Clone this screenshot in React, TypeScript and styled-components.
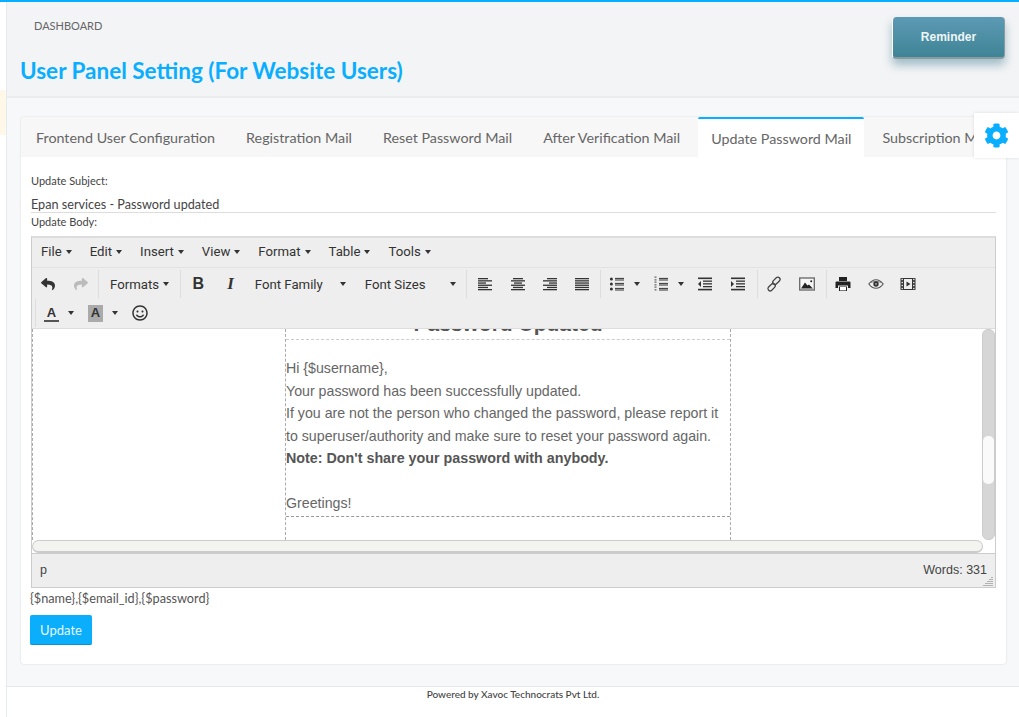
import { ReactNode } from 'react';
import { FaCog, FaReply, FaShare, FaRegSmile } from 'react-icons/fa';
import styled, { createGlobalStyle } from 'styled-components';

const GlobalStyle = createGlobalStyle`
  html, body {
    margin: 0;
    padding: 0;
    height: 717px;
    overflow: hidden;
    background: #fff;
    font-family: Lato, "Liberation Sans", sans-serif;
  }
  * {
    box-sizing: border-box;
  }
`;

const ALIGN: Record<string, number[][]> = {
  left: [[1, 11], [1, 15], [1, 9], [1, 15], [1, 11], [1, 15]],
  center: [[3, 13], [1, 15], [4, 12], [1, 15], [3, 13], [1, 15]],
  right: [[5, 15], [1, 15], [7, 15], [1, 15], [5, 15], [1, 15]],
  justify: [[1, 15], [1, 15], [1, 15], [1, 15], [1, 15], [1, 15]],
};

const AlignIcon = ({ type }: { type: string }) => (
  <svg width="16" height="16" viewBox="0 0 16 16">
    {ALIGN[type].map(([a, b], i) => (
      <rect key={i} x={a} y={2 + i * 2.2} width={b - a} height="1.3" fill="#333" />
    ))}
  </svg>
);

const ListIcon = ({ numbered }: { numbered?: boolean }) => (
  <svg width="16" height="16" viewBox="0 0 16 16">
    {[3, 8, 13].map((y) =>
      numbered ? (
        <path key={y} d={`M1.5 ${y - 2.4}h2v1.2h-2zM1.5 ${y + 0.2}h2v1.2h-2z`} fill="#666" />
      ) : (
        <circle key={y} cx="2.4" cy={y} r="1.5" fill="#333" />
      ),
    )}
    {[2.4, 4, 7.4, 9, 12.4, 14].map((y) => (
      <rect key={y} x="6" y={y - 0.5} width="9" height="1" fill="#333" />
    ))}
  </svg>
);

const IndentIcon = ({ out }: { out?: boolean }) => (
  <svg width="16" height="16" viewBox="0 0 16 16">
    <rect x="1" y="1.5" width="14" height="1.6" fill="#333" />
    <rect x="6" y="4.5" width="9" height="1.3" fill="#333" />
    <rect x="6" y="7.2" width="9" height="1.3" fill="#333" />
    <rect x="6" y="10" width="9" height="1.3" fill="#333" />
    <rect x="1" y="12.8" width="14" height="1.6" fill="#333" />
    <path d={out ? 'M4 5v6L1 8z' : 'M1 5v6l3-3z'} fill="#333" />
  </svg>
);

const LinkIcon = () => (
  <svg width="16" height="16" viewBox="0 0 16 16" fill="none" stroke="#444" strokeWidth="1.3">
    <rect x="8.2" y="0.6" width="4.4" height="8.4" rx="2.2" transform="rotate(45 10.4 4.8)" />
    <rect x="3.4" y="7" width="4.4" height="8.4" rx="2.2" transform="rotate(45 5.6 11.2)" />
  </svg>
);

const ImageIcon = () => (
  <svg width="16" height="16" viewBox="0 0 16 16">
    <rect x="0.7" y="2" width="14.6" height="12" fill="#f6f6f6" stroke="#666" strokeWidth="1.3" />
    <path d="M2 12.6 6 6.5l2.4 3 1.6-1 3.8 4.1z" fill="#222" />
    <circle cx="12.2" cy="5.2" r="1" fill="#222" />
  </svg>
);

const PrintIcon = () => (
  <svg width="16" height="16" viewBox="0 0 16 16">
    <path d="M4 1h8v4H4z" fill="#222" />
    <path d="M1.5 5.5h13a1 1 0 0 1 1 1V12H13V9.5H3V12H.5V6.5a1 1 0 0 1 1-1z" fill="#222" />
    <path d="M4 10.5h8V15H4z" fill="#222" />
    <path d="M5 11h6v3.4H5z" fill="#fff" />
  </svg>
);

const EyeIcon = () => (
  <svg width="16" height="16" viewBox="0 0 16 16">
    <path d="M.8 8C3 5 5.4 3.7 8 3.7S13 5 15.2 8c-2.2 3-4.6 4.3-7.2 4.3S3 11 .8 8z" fill="none" stroke="#555" strokeWidth="1.1" />
    <path d="M2.5 6.6C4.5 5.2 11.5 5.2 13.5 6.6" fill="none" stroke="#777" strokeWidth="1" />
    <circle cx="8" cy="8" r="2.7" fill="#333" />
    <circle cx="8" cy="8" r="0.9" fill="#aaa" />
  </svg>
);

const MediaIcon = () => (
  <svg width="16" height="16" viewBox="0 0 16 16">
    <rect x="0.5" y="2" width="15" height="12" fill="#333" />
    <rect x="4" y="3" width="8" height="10" fill="#eee" />
    {[3, 6, 9, 12].map((y) => (
      <g key={y}>
        <rect x="1.5" y={y - 0.2} width="1.4" height="1.4" fill="#eee" />
        <rect x="13.1" y={y - 0.2} width="1.4" height="1.4" fill="#eee" />
      </g>
    ))}
    <path d="M6.5 5.5v5l4-2.5z" fill="#333" />
  </svg>
);

const Caret = () => <CaretMark />;

interface ToolProps {
  children: ReactNode;
  $w?: number;
}

const Tool = ({ children, $w = 32.4 }: ToolProps) => <ToolButton $w={$w}>{children}</ToolButton>;

const SplitTool = ({ children }: { children: ReactNode }) => (
  <SplitButton>
    {children}
    <SplitCaret />
  </SplitButton>
);

const tabs = [
  'Frontend User Configuration',
  'Registration Mail',
  'Reset Password Mail',
  'After Verification Mail',
  'Update Password Mail',
  'Subscription Mail',
];

const menus = ['File', 'Edit', 'Insert', 'View', 'Format', 'Table', 'Tools'];

const App = () => {
  return (
    <>
      <GlobalStyle />
      <Page>
        <Sidebar>
          <SidebarNotice />
        </Sidebar>
        <Main>
          <Header>
            <Crumb>DASHBOARD</Crumb>
            <Title>User Panel Setting (For Website Users)</Title>
            <ReminderButton>Reminder</ReminderButton>
          </Header>
          <Content>
            <Card>
              <TabBar>
                {tabs.map((tab) => (
                  <Tab key={tab} $active={tab === 'Update Password Mail'}>
                    {tab}
                  </Tab>
                ))}
              </TabBar>
              <Form>
                <FieldLabel>Update Subject:</FieldLabel>
                <SubjectInput>Epan services - Password updated</SubjectInput>
                <BodyLabel>Update Body:</BodyLabel>
                <Editor>
                  <MenuBar>
                    {menus.map((menu) => (
                      <MenuItem key={menu}>
                        {menu}
                        <Caret />
                      </MenuItem>
                    ))}
                  </MenuBar>
                  <Toolbar>
                    <ToolRow>
                      <ToolGroup $w={67}>
                        <Tool><FaReply size={14} color="#333" /></Tool>
                        <Tool><FaShare size={14} color="#bbb" /></Tool>
                      </ToolGroup>
                      <ToolGroup $w={82}>
                        <ListBox $w={81}>Formats<Caret /></ListBox>
                      </ToolGroup>
                      <ToolGroup $w={286}>
                        <Tool><BoldGlyph>B</BoldGlyph></Tool>
                        <Tool><ItalicGlyph>I</ItalicGlyph></Tool>
                        <ListBox $w={110} $spread>Font Family<Caret /></ListBox>
                        <ListBox $w={110} $spread>Font Sizes<Caret /></ListBox>
                      </ToolGroup>
                      <ToolGroup $w={134} $inset>
                        <Tool><AlignIcon type="left" /></Tool>
                        <Tool><AlignIcon type="center" /></Tool>
                        <Tool><AlignIcon type="right" /></Tool>
                        <Tool><AlignIcon type="justify" /></Tool>
                      </ToolGroup>
                      <ToolGroup $w={157}>
                        <SplitTool><ListIcon /></SplitTool>
                        <SplitTool><ListIcon numbered /></SplitTool>
                        <Tool><IndentIcon out /></Tool>
                        <Tool><IndentIcon /></Tool>
                      </ToolGroup>
                      <ToolGroup $w={69}>
                        <Tool><LinkIcon /></Tool>
                        <Tool><ImageIcon /></Tool>
                      </ToolGroup>
                      <ToolGroup $w={100} $last>
                        <Tool><PrintIcon /></Tool>
                        <Tool><EyeIcon /></Tool>
                        <Tool><MediaIcon /></Tool>
                      </ToolGroup>
                    </ToolRow>
                    <ToolRow $second>
                      <ToolGroup $w={130} $last $divider>
                        <SplitTool><ColorGlyph>A</ColorGlyph></SplitTool>
                        <SplitTool><ColorGlyph $filled>A</ColorGlyph></SplitTool>
                        <Tool><FaRegSmile size={16} color="#333" /></Tool>
                      </ToolGroup>
                    </ToolRow>
                  </Toolbar>
                  <Canvas>
                    <OuterTable>
                      <InnerTable>
                        <HeadingCell>Password Updated</HeadingCell>
                        <BodyCell>
                          Hi {'{$username}'},<br />
                          Your password has been successfully updated.<br />
                          If you are not the person who changed the password, please report it<br />
                          to superuser/authority and make sure to reset your password again.<br />
                          <strong>Note: Don't share your password with anybody.</strong><br />
                          <br />
                          Greetings!
                        </BodyCell>
                      </InnerTable>
                    </OuterTable>
                    <VerticalTrack>
                      <VerticalThumb />
                    </VerticalTrack>
                    <HorizontalThumb />
                  </Canvas>
                  <StatusBar>
                    <span>p</span>
                    <span>Words: 331</span>
                    <ResizeHandle>
                      <svg width="10" height="10" viewBox="0 0 10 10">
                        <path
                          d="M9 1v1M7 3v1M9 3v1M5 5v1M7 5v1M9 5v1M3 7v1M5 7v1M7 7v1M9 7v1M1 9v1M3 9v1M5 9v1M7 9v1M9 9v1"
                          stroke="#777"
                          strokeWidth="1"
                        />
                      </svg>
                    </ResizeHandle>
                  </StatusBar>
                </Editor>
                <Tokens>{'{$name},{$email_id},{$password}'}</Tokens>
                <UpdateButton>Update</UpdateButton>
              </Form>
            </Card>
          </Content>
          <Footer>Powered by Xavoc Technocrats Pvt Ltd.</Footer>
        </Main>
        <SettingsTab>
          <FaCog size={25} color="#0aaeff" />
        </SettingsTab>
      </Page>
    </>
  );
};

const Page = styled.div`
  position: relative;
  display: flex;
  width: 1019px;
  height: 717px;
  overflow: hidden;
  border-top: 2px solid #0aaeff;
`;

const Sidebar = styled.aside`
  width: 7px;
  flex-shrink: 0;
  padding-top: 88px;
  background: #fff;
  border-right: 1px solid #e6ebf0;
`;

const SidebarNotice = styled.div`
  height: 45px;
  background: #fff8e8;
`;

const Main = styled.main`
  display: flex;
  min-width: 0;
  flex: 1;
  flex-direction: column;
`;

const Header = styled.header`
  position: relative;
  height: 96px;
  flex-shrink: 0;
  padding: 17px 0 0 13px;
  background: #f3f4f6;
  border-bottom: 2px solid #ebecee;
`;

const Crumb = styled.div`
  padding-left: 14px;
  color: #666;
  font-size: 11px;
  line-height: 14px;
`;

const Title = styled.h1`
  margin: 23px 0 0;
  color: #0aaeff;
  font-size: 22.5px;
  font-weight: 700;
  line-height: 30px;
`;

const ReminderButton = styled.button`
  position: absolute;
  top: 15px;
  right: 14px;
  width: 113px;
  height: 42px;
  padding: 0;
  color: #eef5f7;
  font-family: "Liberation Sans", sans-serif;
  font-size: 12px;
  font-weight: 700;
  background: linear-gradient(#5c9ab3, #3f8496);
  border: 0;
  border-radius: 4px;
  border-left: 1px solid #fff;
  border-bottom: 2px solid #8a9ba0;
  border-right: 1px solid #8a9ba0;
  box-shadow: 0 6px 10px rgba(60, 120, 140, 0.45);
`;

const Content = styled.div`
  height: 589px;
  flex-shrink: 0;
  padding: 19px 13px 0 14px;
  background: #f7f8f9;
  border-bottom: 1px solid #e6e8ea;
`;

const Card = styled.section`
  height: 547px;
  overflow: hidden;
  background: #fff;
  border-radius: 3px;
  box-shadow: 0 0 2px rgba(0, 0, 0, 0.16);
`;

const TabBar = styled.nav`
  display: flex;
  height: 40px;
  padding-left: 2px;
  background: #f7f7f7;
  white-space: nowrap;
`;

const Tab = styled.div<{ $active?: boolean }>`
  flex-shrink: 0;
  margin-right: 5px;
  padding: 0 13px;
  color: #666;
  font-size: 14.3px;
  line-height: ${({ $active }) => ($active ? '39px' : '37px')};
  background: ${({ $active }) => ($active ? '#fff' : 'transparent')};
  border-top: 2px solid ${({ $active }) => ($active ? '#0aaeff' : 'transparent')};
  border-radius: 2px 2px 0 0;
`;

const Form = styled.div`
  padding: 17px 10px 0;
`;

const FieldLabel = styled.div`
  color: #444;
  font-size: 11px;
  line-height: 14px;
`;

const SubjectInput = styled.div`
  height: 17px;
  margin-top: 8px;
  color: #444;
  font-size: 12.65px;
  line-height: 17px;
  border-bottom: 1px solid #ddd;
`;

const BodyLabel = styled(FieldLabel)`
  margin-top: 2px;
`;

const Editor = styled.div`
  height: 352px;
  margin-top: 7px;
  background: #eee;
  border: 1px solid #ccc;
  border-top-width: 2px;
  border-top-color: #ddd;
`;

const MenuBar = styled.div`
  display: flex;
  height: 30px;
  padding: 0 0 2px 9px;
  gap: 18px;
  align-items: center;
  border-bottom: 1px solid #e2e2e2;
`;

const MenuItem = styled.div`
  display: flex;
  color: #333;
  font-family: Roboto, "Liberation Sans", sans-serif;
  font-size: 13.2px;
  align-items: center;
`;

const CaretMark = styled.span`
  width: 0;
  height: 0;
  margin-left: 4px;
  border-top: 4px solid #333;
  border-right: 3px solid transparent;
  border-left: 3px solid transparent;
`;

const SplitCaret = styled(CaretMark)`
  margin-left: 9px;
`;

const Toolbar = styled.div`
  height: 61px;
  padding-top: 2px;
  border-bottom: 1px solid #ddd;
`;

const ToolRow = styled.div<{ $second?: boolean }>`
  display: flex;
  height: 28px;
  margin-bottom: 1px;
  padding-left: ${({ $second }) => ($second ? '3px' : '0')};
`;

const ToolGroup = styled.div<{ $w: number; $last?: boolean; $divider?: boolean; $inset?: boolean }>`
  display: flex;
  width: ${({ $w }) => $w}px;
  flex-shrink: 0;
  padding-left: ${({ $inset }) => ($inset ? '2px' : '0')};
  align-items: center;
  border-right: ${({ $last }) => ($last ? '0' : '1px solid #ddd')};
  border-left: ${({ $divider }) => ($divider ? '1px solid #ddd' : '0')};
`;

const ToolButton = styled.div<{ $w: number }>`
  display: flex;
  width: ${({ $w }) => $w}px;
  height: 28px;
  flex-shrink: 0;
  align-items: center;
  justify-content: center;
`;

const SplitButton = styled.div`
  display: flex;
  width: 44px;
  height: 28px;
  padding-left: 8px;
  flex-shrink: 0;
  align-items: center;
`;

const ListBox = styled.div<{ $w: number; $spread?: boolean }>`
  display: flex;
  width: ${({ $w }) => $w}px;
  height: 28px;
  padding: 0 ${({ $spread }) => ($spread ? '10px' : '0')} 0 ${({ $spread }) => ($spread ? '9px' : '11px')};
  color: #333;
  font-family: Roboto, "Liberation Sans", sans-serif;
  font-size: 13.2px;
  align-items: center;
  justify-content: ${({ $spread }) => ($spread ? 'space-between' : 'flex-start')};
`;

const BoldGlyph = styled.span`
  position: relative;
  left: 1px;
  color: #333;
  font-family: "Liberation Sans", sans-serif;
  font-size: 16px;
  font-weight: 700;
`;

const ItalicGlyph = styled(BoldGlyph)`
  font-family: "Liberation Serif", serif;
  font-size: 17px;
  font-style: italic;
`;

const ColorGlyph = styled.span<{ $filled?: boolean }>`
  width: 15px;
  color: #333;
  font-family: "Liberation Sans", sans-serif;
  font-size: 13px;
  font-weight: 700;
  line-height: 15px;
  text-align: center;
  background: ${({ $filled }) => ($filled ? '#aaa' : 'transparent')};
  border-bottom: 2px solid ${({ $filled }) => ($filled ? '#aaa' : '#555')};
`;

const Canvas = styled.div`
  position: relative;
  height: 224px;
  overflow: hidden;
  background: #fff;
`;

const OuterTable = styled.div`
  display: flow-root;
  height: 211px;
  padding-left: 252px;
  border-left: 1px dashed #aaa;
`;

const InnerTable = styled.div`
  display: flow-root;
  width: 446px;
  height: 211px;
  border-right: 1px dashed #aaa;
  border-left: 1px dashed #aaa;
`;

const HeadingCell = styled.div`
  display: flex;
  height: 40px;
  margin-top: -29px;
  padding-bottom: 4px;
  color: #555;
  font-family: "Liberation Sans", sans-serif;
  font-size: 21px;
  font-weight: 700;
  line-height: 22px;
  align-items: flex-end;
  justify-content: center;
  border-bottom: 1px dashed #ccc;
`;

const BodyCell = styled.div`
  height: 177px;
  padding-top: 17px;
  color: #666;
  font-family: "Liberation Sans", sans-serif;
  font-size: 14.2px;
  line-height: 22.5px;
  white-space: nowrap;
  border-bottom: 1px dashed #999;

  strong {
    color: #555;
    font-size: 14.3px;
  }
`;

const VerticalTrack = styled.div`
  position: absolute;
  top: 0;
  right: 0;
  width: 13px;
  height: 211px;
  background: #d6d6d6;
  border-radius: 6px;
  border: 1px solid #ccc;
`;

const VerticalThumb = styled.div`
  position: absolute;
  top: 106px;
  left: 0;
  width: 11px;
  height: 48px;
  background: #fafafa;
  border-radius: 5px;
`;

const HorizontalThumb = styled.div`
  position: absolute;
  bottom: 0;
  left: 0;
  width: 951px;
  height: 13px;
  background: #f3f3f0;
  border: 1px solid #ccc;
  border-bottom-width: 2px;
  border-radius: 7px;
`;

const StatusBar = styled.div`
  position: relative;
  display: flex;
  height: 34px;
  padding: 0 8px 2px 8px;
  color: #444;
  font-family: "Liberation Sans", sans-serif;
  font-size: 12.5px;
  align-items: center;
  justify-content: space-between;
  border-top: 1px solid #ccc;
`;

const ResizeHandle = styled.div`
  position: absolute;
  right: 2px;
  bottom: 1px;
  line-height: 0;
`;

const Tokens = styled.div`
  margin: 2px 0 0 -1px;
  color: #555;
  font-size: 12.7px;
  line-height: 17px;
`;

const UpdateButton = styled.button`
  display: block;
  width: 62px;
  height: 30px;
  margin: 8px 0 0 -1px;
  padding: 0;
  color: #e6f6ff;
  font-family: Lato, sans-serif;
  font-size: 13px;
  background: #0aaefa;
  border: 0;
  border-bottom: 1px solid #0a8fd0;
  border-radius: 2px;
`;

const Footer = styled.footer`
  flex: 1;
  color: #444;
  font-size: 10px;
  line-height: 14px;
  text-align: center;
  font-weight: 500;
  background: #fff;
`;

const SettingsTab = styled.div`
  position: absolute;
  top: 111px;
  right: 0;
  display: flex;
  width: 45px;
  height: 45px;
  align-items: center;
  padding-left: 10px;
  background: #fff;
  box-shadow: 0 0 3px rgba(0, 0, 0, 0.12);
`;

export default App;
